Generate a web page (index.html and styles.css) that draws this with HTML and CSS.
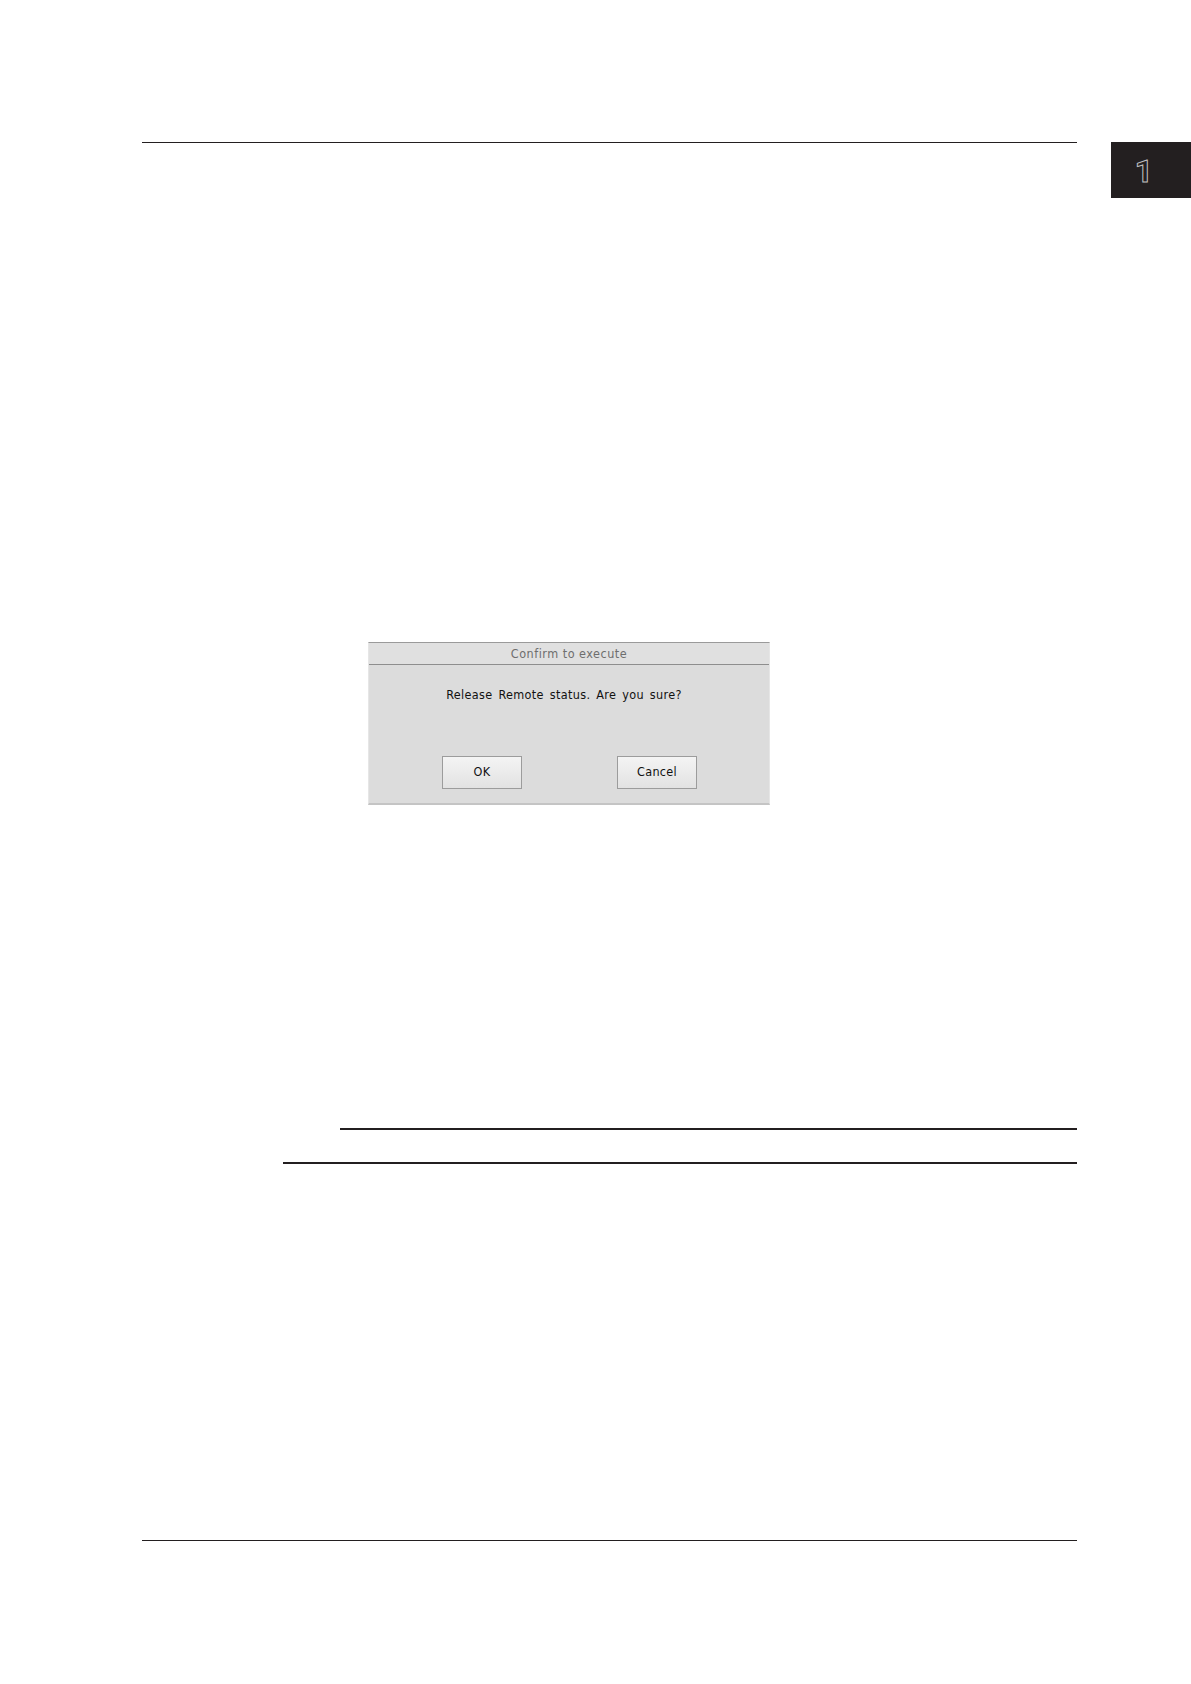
FILE: index.html
```html
<!DOCTYPE html>
<html lang="en">
<head>
<meta charset="utf-8">
<title>Release Remote status</title>
<link rel="stylesheet" href="styles.css">
</head>
<body>
<div class="page">
  <header class="head">
    <div class="head-rule"></div>
    <div class="chapter-tab"><span class="chapter-num">1</span></div>
  </header>

  <section class="figure">
    <div class="dialog">
      <div class="dialog-title">Confirm to execute</div>
      <div class="dialog-body">
        <p class="dialog-msg">Release Remote status. Are you sure?</p>
        <div class="dialog-buttons">
          <button class="btn btn-ok" type="button">OK</button>
          <button class="btn btn-cancel" type="button">Cancel</button>
        </div>
      </div>
    </div>
  </section>

  <section class="note">
    <div class="note-rule-top"></div>
    <div class="note-rule-bottom"></div>
  </section>

  <footer class="foot">
    <div class="foot-rule"></div>
  </footer>
</div>
</body>
</html>
```

FILE: styles.css
```css
html, body {
  margin: 0;
  padding: 0;
  background: #ffffff;
}

.page {
  width: 1191px;
  height: 1684px;
  font-family: "Liberation Sans", Arial, sans-serif;
  color: #231f20;
}

.head {
  display: flex;
  align-items: flex-start;
  padding-top: 142px;
}

.head-rule {
  margin-left: 142px;
  width: 935px;
  border-top: 1.5px solid #231f20;
}

.chapter-tab {
  margin-left: 34px;
  width: 80px;
  height: 56px;
  background: #231f20;
  display: flex;
  align-items: center;
  justify-content: center;
  padding-right: 14px;
  box-sizing: border-box;
}

.chapter-num {
  font-family: Roboto, "Open Sans", sans-serif;
  font-size: 32px;
  font-weight: bold;
  color: #231f20;
  -webkit-text-stroke: 1px #c0c0c0;
  line-height: 1;
  margin-top: 2px;
}

.figure {
  margin-top: 444px;
  padding-left: 368px;
}

.dialog {
  width: 402px;
  background: #dcdcdc;
  border-top: 1px solid #9a9a9a;
  border-bottom: 2px solid #c4c4c4;
  border-left: 1px solid #e6e6e6;
  border-right: 1px solid #e6e6e6;
  box-sizing: border-box;
  font-family: "DejaVu Sans", "Liberation Sans", sans-serif;
  font-stretch: condensed;
  font-size: 12.5px;
}

.dialog-title {
  height: 21px;
  line-height: 21px;
  text-align: center;
  color: #6e6e6e;
  background: #e0e0e0;
  border-bottom: 1px solid #8e8e8e;
  letter-spacing: 0.5px;
}

.dialog-body {
  padding: 23px 0 14px;
}

.dialog-msg {
  margin: 0;
  height: 14px;
  line-height: 14px;
  text-align: center;
  color: #111111;
  padding-right: 10px;
  letter-spacing: 0.35px;
  word-spacing: 2px;
}

.dialog-buttons {
  display: flex;
  margin-top: 54px;
  padding-left: 73px;
  gap: 95px;
}

.btn {
  width: 80px;
  height: 33px;
  padding: 0 0 3px;
  border: 1px solid #9c9c9c;
  background: linear-gradient(#f4f4f4, #e2e2e2);
  font-family: "DejaVu Sans", "Liberation Sans", sans-serif;
  font-stretch: condensed;
  font-size: 12.5px;
  color: #111111;
  box-sizing: border-box;
  letter-spacing: 0.3px;
}

.note {
  margin-top: 323px;
  display: flex;
  flex-direction: column;
}

.note-rule-top {
  margin-left: 340px;
  width: 737px;
  border-top: 2px solid #231f20;
}

.note-rule-bottom {
  margin-top: 32px;
  margin-left: 283px;
  width: 794px;
  border-top: 2px solid #231f20;
}

.foot {
  margin-top: 376px;
}

.foot-rule {
  margin-left: 142px;
  width: 935px;
  border-top: 1.5px solid #231f20;
}
```
